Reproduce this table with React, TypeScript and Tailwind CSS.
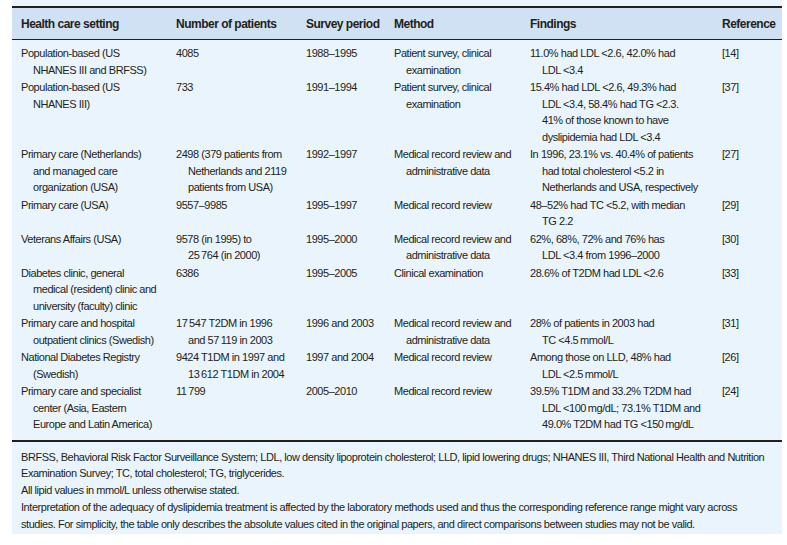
import React from "react";

type Row = {
  c1: string[];
  c2: string[];
  c3: string[];
  c4: string[];
  c5: string[];
  c6: string;
};

const T = "\u2009";

const rows: Row[] = [
  {
    c1: ["Population-based (US", "NHANES III and BRFSS)"],
    c2: ["4085"],
    c3: ["1988–1995"],
    c4: ["Patient survey, clinical", "examination"],
    c5: ["11.0% had LDL <2.6, 42.0% had", "LDL <3.4"],
    c6: "[14]",
  },
  {
    c1: ["Population-based (US", "NHANES III)"],
    c2: ["733"],
    c3: ["1991–1994"],
    c4: ["Patient survey, clinical", "examination"],
    c5: [
      "15.4% had LDL <2.6, 49.3% had",
      "LDL <3.4, 58.4% had TG <2.3.",
      "41% of those known to have",
      "dyslipidemia had LDL <3.4",
    ],
    c6: "[37]",
  },
  {
    c1: ["Primary care (Netherlands)", "and managed care", "organization (USA)"],
    c2: ["2498 (379 patients from", "Netherlands and 2119", "patients from USA)"],
    c3: ["1992–1997"],
    c4: ["Medical record review and", "administrative data"],
    c5: [
      "In 1996, 23.1% vs. 40.4% of patients",
      "had total cholesterol <5.2 in",
      "Netherlands and USA, respectively",
    ],
    c6: "[27]",
  },
  {
    c1: ["Primary care (USA)"],
    c2: ["9557–9985"],
    c3: ["1995–1997"],
    c4: ["Medical record review"],
    c5: ["48–52% had TC <5.2, with median", "TG 2.2"],
    c6: "[29]",
  },
  {
    c1: ["Veterans Affairs (USA)"],
    c2: ["9578 (in 1995) to", `25${T}764 (in 2000)`],
    c3: ["1995–2000"],
    c4: ["Medical record review and", "administrative data"],
    c5: ["62%, 68%, 72% and 76% has", "LDL <3.4 from 1996–2000"],
    c6: "[30]",
  },
  {
    c1: ["Diabetes clinic, general", "medical (resident) clinic and", "university (faculty) clinic"],
    c2: ["6386"],
    c3: ["1995–2005"],
    c4: ["Clinical examination"],
    c5: ["28.6% of T2DM had LDL <2.6"],
    c6: "[33]",
  },
  {
    c1: ["Primary care and hospital", "outpatient clinics (Swedish)"],
    c2: [`17${T}547 T2DM in 1996`, `and 57${T}119 in 2003`],
    c3: ["1996 and 2003"],
    c4: ["Medical record review and", "administrative data"],
    c5: ["28% of patients in 2003 had", `TC <4.5${T}mmol/L`],
    c6: "[31]",
  },
  {
    c1: ["National Diabetes Registry", "(Swedish)"],
    c2: ["9424 T1DM in 1997 and", `13${T}612 T1DM in 2004`],
    c3: ["1997 and 2004"],
    c4: ["Medical record review"],
    c5: ["Among those on LLD, 48% had", `LDL <2.5${T}mmol/L`],
    c6: "[26]",
  },
  {
    c1: ["Primary care and specialist", "center (Asia, Eastern", "Europe and Latin America)"],
    c2: [`11${T}799`],
    c3: ["2005–2010"],
    c4: ["Medical record review"],
    c5: [
      "39.5% T1DM and 33.2% T2DM had",
      `LDL <100${T}mg/dL; 73.1% T1DM and`,
      `49.0% T2DM had TG <150${T}mg/dL`,
    ],
    c6: "[24]",
  },
];

function Cell({ lines }: { lines: string[] }) {
  return (
    <div className="whitespace-nowrap pl-[12px] indent-[-12px]">
      {lines.map((l, i) => (
        <React.Fragment key={i}>
          {i > 0 && <br />}
          {l}
        </React.Fragment>
      ))}
    </div>
  );
}

const cols = "grid grid-cols-[155px_130px_88px_136px_192px_1fr]";

export default function App() {
  return (
    <div className="w-[787px] h-[545px] overflow-hidden bg-white text-[#231f20] font-['Liberation_Sans',Arial,sans-serif]">
      <div className="ml-[12px] w-[770px] bg-[#e9f4fc] pt-[6px] pb-[1px]">
        <div
          className={`${cols} h-[34px] items-center border-t-2 border-b border-[#231f20] bg-[#cfe1f2] pl-[9px] text-[12px] font-bold leading-[16px] tracking-[-0.5px]`}
        >
          <div>Health care setting</div>
          <div>Number of patients</div>
          <div>Survey period</div>
          <div>Method</div>
          <div>Findings</div>
          <div>Reference</div>
        </div>
        <div className="flex flex-col gap-[1px] pl-[9px] pt-[5px] pb-[7px] text-[11px] leading-[16.5px] tracking-[-0.45px]">
          {rows.map((r, i) => (
            <div key={i} className={cols}>
              <Cell lines={r.c1} />
              <Cell lines={r.c2} />
              <Cell lines={r.c3} />
              <Cell lines={r.c4} />
              <Cell lines={r.c5} />
              <Cell lines={[r.c6]} />
            </div>
          ))}
        </div>
        <div className="border-t-2 border-[#231f20] pl-[9px] pt-[7px] pb-[1px] text-[11px] leading-[16.75px] tracking-[-0.45px] whitespace-nowrap">
          <div>
            BRFSS, Behavioral Risk Factor Surveillance System; LDL, low density lipoprotein cholesterol; LLD, lipid lowering drugs; NHANES III, Third National Health and Nutrition
          </div>
          <div>Examination Survey; TC, total cholesterol; TG, triglycerides.</div>
          <div>All lipid values in mmol/L unless otherwise stated.</div>
          <div>
            Interpretation of the adequacy of dyslipidemia treatment is affected by the laboratory methods used and thus the corresponding reference range might vary across
          </div>
          <div>
            studies. For simplicity, the table only describes the absolute values cited in the original papers, and direct comparisons between studies may not be valid.
          </div>
        </div>
      </div>
    </div>
  );
}
